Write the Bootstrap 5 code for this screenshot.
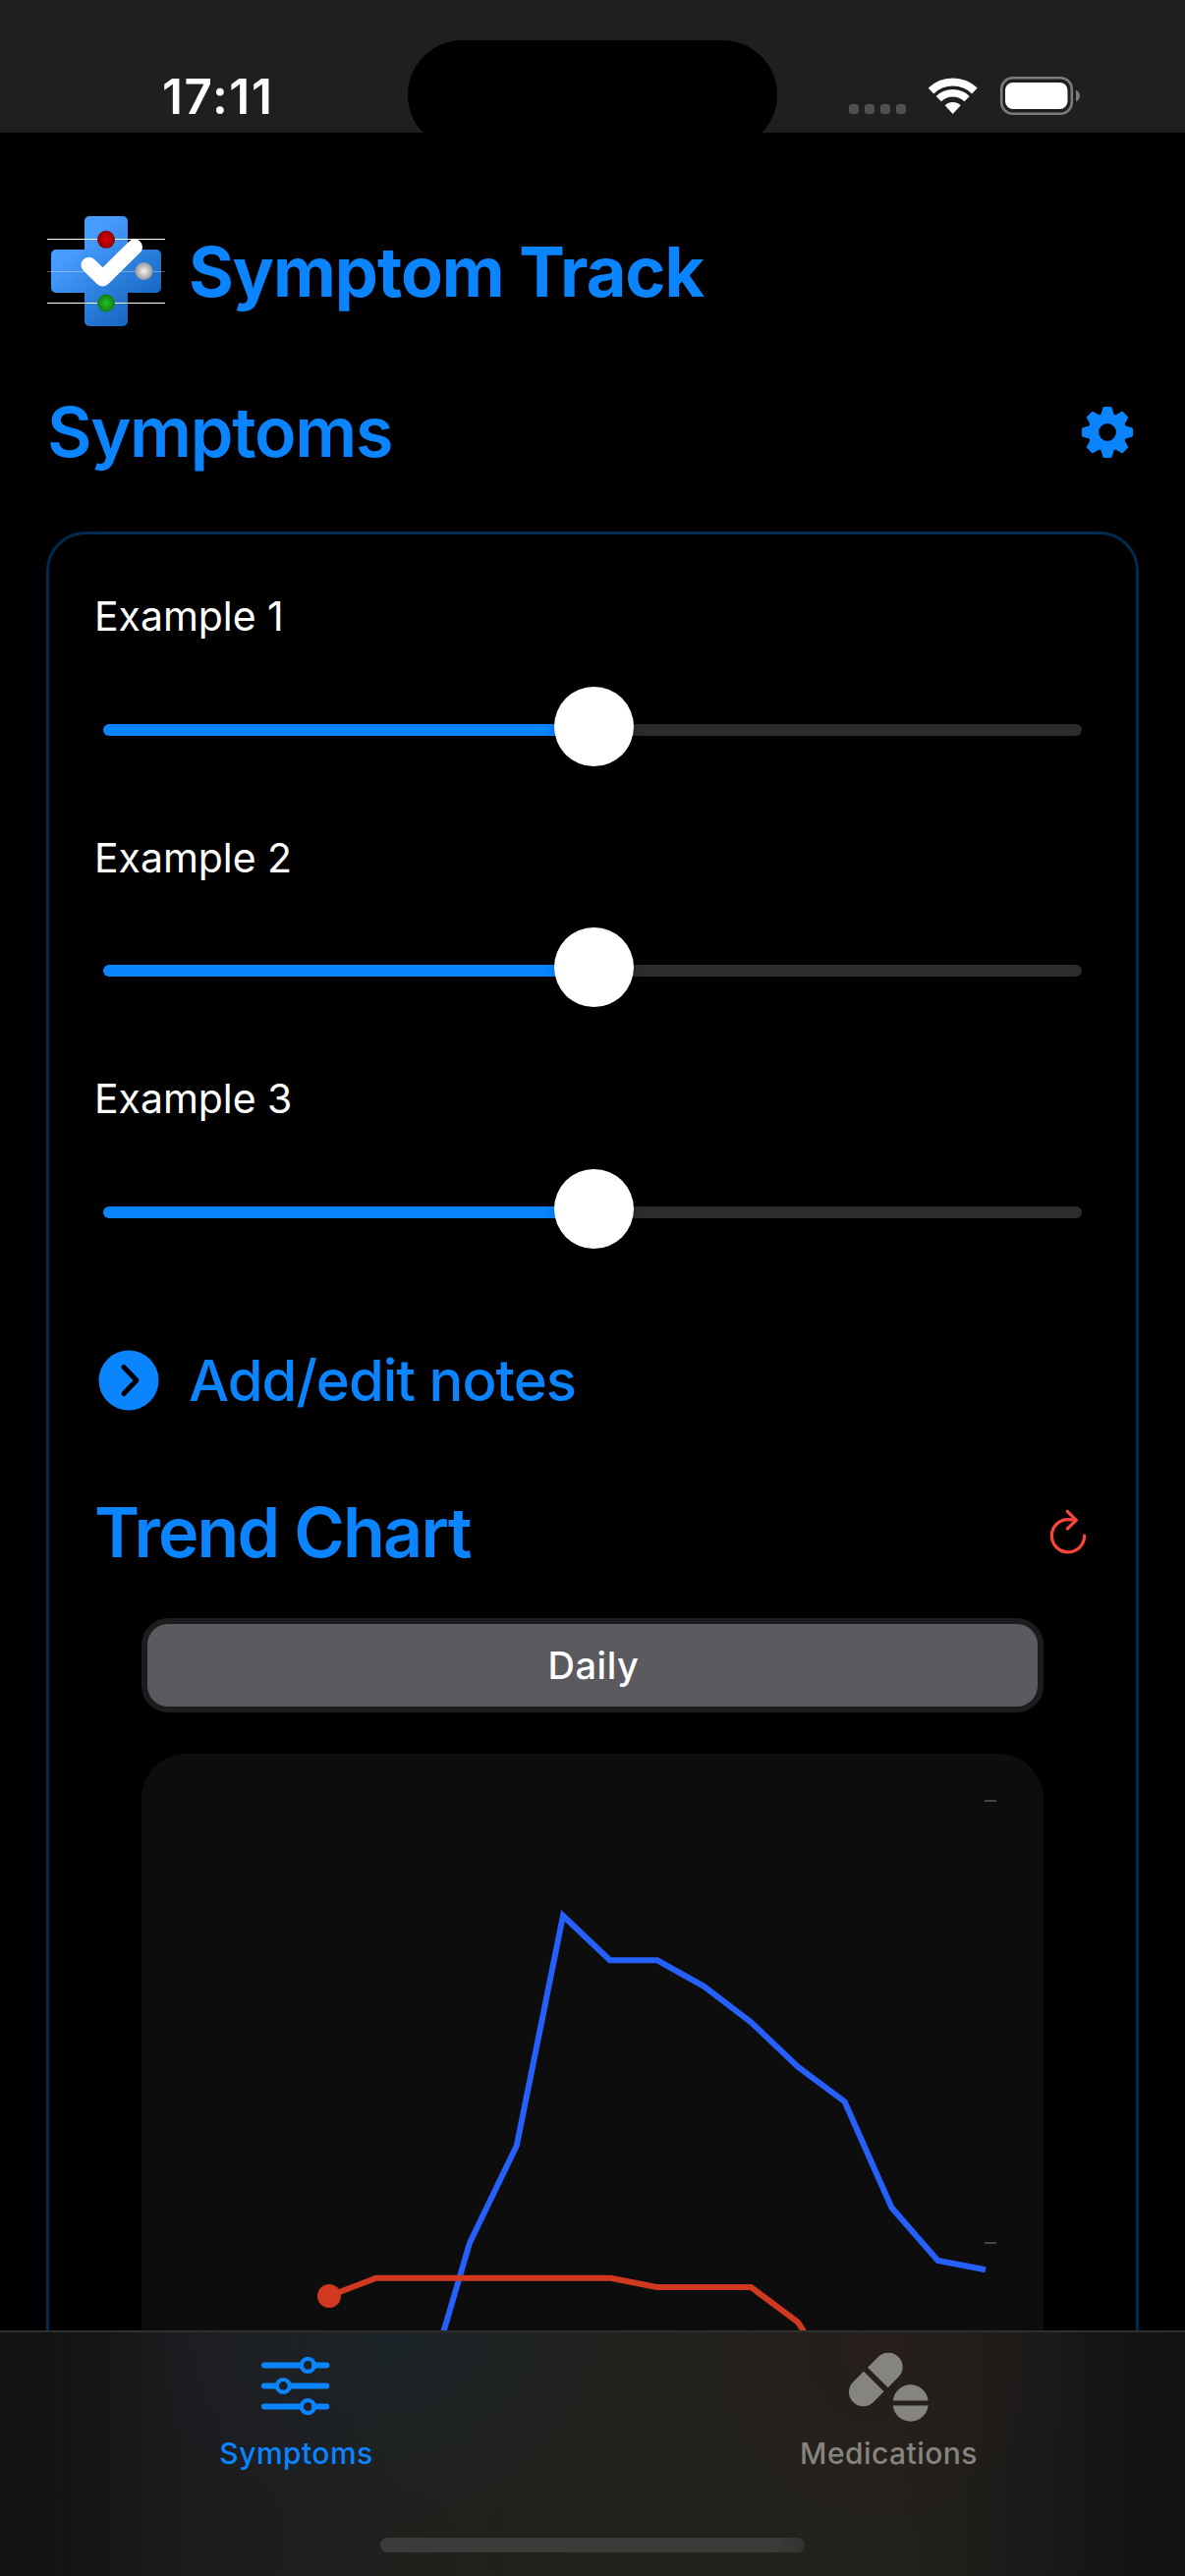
<!DOCTYPE html>
<html lang="en" data-bs-theme="dark">
<head>
<meta charset="utf-8">
<meta name="viewport" content="width=device-width, initial-scale=1">
<title>Symptom Track</title>
<link href="https://cdn.jsdelivr.net/npm/bootstrap@5.3.0/dist/css/bootstrap.min.css" rel="stylesheet">
<style>
:root{--ios-blue:#0a84ff}
body{background:#000;color:#fff;font-family:Inter,"Liberation Sans",sans-serif;height:2622px;overflow:hidden}
svg{display:block;flex:none}
.text-ios{color:var(--ios-blue)}
.status{height:135px;background:#1f1f1f}
.status-side{width:415px;flex:none;height:135px}
.clock{font-size:49.5px;font-weight:600;letter-spacing:1.6px;line-height:60px;padding:68px 0 0 165px}
.island{width:376px;height:111px;margin-top:41px;border-radius:56px;background:#000;flex:none}
.status-icons{padding-right:105px}
.screen{padding:81px 47px 0}
.brand{height:120px;gap:24px;padding-left:1px}
.brand-name{font-size:70px;font-weight:700;letter-spacing:-1px;line-height:80px;margin:0;padding-top:1px}
.heading{font-size:70px;font-weight:600;letter-spacing:-1.3px;line-height:80px;margin:0;height:80px}
.page-head{margin-top:64px;padding-right:5px;padding-left:1px}
.panel{margin-top:61px;width:1112px;height:2200px;border:3px solid #002a50;border-radius:40px;padding:53px 46px 0;background:#000}
.symptom{height:245.5px}
.symptom label{display:block;font-size:41px;line-height:60px;height:60px;letter-spacing:-.05px}
.slider{display:block;width:996px;height:81px;margin:45px 0 0 9px}
.slider::-webkit-slider-runnable-track{height:12px;border-radius:6px;background:linear-gradient(90deg,var(--ios-blue) 50%,#2c2c2e 50%)}
.slider::-webkit-slider-thumb{width:81px;height:81px;margin-top:-38px;background:#fff;border-radius:50%;box-shadow:0 1px 12px rgba(0,0,0,.2)}
.notes{margin-top:40.5px;height:62px;gap:30px;font-size:58px;font-weight:500;letter-spacing:-1px;line-height:62px;padding:0 0 0 4px;border:0;background:none}
.trend-head{margin-top:84px;padding-right:1px}
.trend-head .heading{letter-spacing:-1.8px}
.segments{margin:47px 48px 0;height:96px;width:918px;padding:6px;border-radius:27px;background:#1c1c1e}
.segments .btn{border-radius:21px;background:#5b5a5f;color:#fff;font-size:38px;font-weight:500;letter-spacing:.5px;line-height:84px;padding:0 0 0 2px;border:0}
.chart{margin:42px 48px 0;width:918px;height:900px;border-radius:46px;background:#0d0d0d;overflow:hidden}
.tabs{height:250px;flex:none;border-top:2px solid #2f2f2f;background:
 radial-gradient(ellipse 260px 200px at 400px 0,rgba(28,36,42,.9),rgba(28,36,42,0)),
 radial-gradient(ellipse 220px 240px at 890px 20px,rgba(40,29,26,.7),rgba(40,29,26,0)),
 linear-gradient(90deg,#111412 0,#141615 8%,#1c1c1f 16%,#1d1d1f 22%,#20211d 34%,#22221c 50%,#22221d 76%,#1b1b19 85%,#141716 92%,#111313 100%)}
.tab{flex:1 1 0;height:145px;padding-top:16px;color:#858480;font-size:30px;font-weight:500;letter-spacing:.45px;line-height:40px;gap:3px;text-decoration:none}
.tab.active{color:var(--ios-blue)}
.home-bar{width:432px;height:15px;margin:64px auto 0;border-radius:8px;background:linear-gradient(90deg,#3c3b39 92%,#333230)}
</style>
</head>
<body class="d-flex flex-column">
<header class="status d-flex align-items-start flex-shrink-0 overflow-hidden">
  <div class="status-side"><div class="clock">17:11</div></div>
  <div class="island"></div>
  <div class="status-side status-icons d-flex justify-content-end">
    <svg width="240" height="135" viewBox="862 0 240 135">
      <g fill="#4f4f4f"><rect x="865" y="106" width="10" height="10" rx="3"/><rect x="881" y="106" width="10" height="10" rx="3"/><rect x="897" y="106" width="10" height="10" rx="3"/><rect x="913" y="106" width="10" height="10" rx="3"/></g>
      <g fill="none" stroke="#fff"><path stroke-width="8" d="M948.5 92.5A32 32 0 0 1 992.9 92.5"/><path stroke-width="7.5" d="M956.3 100.6A20.7 20.7 0 0 1 985.1 100.6"/></g>
      <path fill="#fff" d="M970.7 116 962.7 107.2A11.5 11.5 0 0 1 978.7 107.2Z"/>
      <rect x="1020.2" y="79.2" width="71.6" height="36.6" rx="11.5" fill="none" stroke="#7b7b7b" stroke-width="2.6"/>
      <rect x="1024" y="84" width="63.5" height="27" rx="8" fill="#fff"/>
      <path fill="#7b7b7b" d="M1096 91.5q4 2 4 6t-4 6z"/>
    </svg>
  </div>
</header>

<main class="screen flex-grow-1 overflow-hidden">
  <div class="brand d-flex align-items-center">
    <svg width="120" height="120" viewBox="48 216 120 120">
      <defs>
        <linearGradient id="cross" gradientUnits="userSpaceOnUse" x1="75" y1="240" x2="145" y2="320"><stop offset=".1" stop-color="#479cff"/><stop offset="1" stop-color="#1565c0"/></linearGradient>
        <radialGradient id="red"><stop stop-color="#e60000"/><stop offset="1" stop-color="#880000"/></radialGradient>
        <radialGradient id="green"><stop stop-color="#1ec31e"/><stop offset="1" stop-color="#157a15"/></radialGradient>
        <radialGradient id="gray"><stop stop-color="#f5f5f5"/><stop offset="1" stop-color="#999"/></radialGradient>
      </defs>
      <path fill="url(#cross)" d="M91 220h34a5 5 0 0 1 5 5v29h29a5 5 0 0 1 5 5v34a5 5 0 0 1-5 5h-29v29a5 5 0 0 1-5 5h-34a5 5 0 0 1-5-5v-29h-29a5 5 0 0 1-5-5v-34a5 5 0 0 1 5-5h29v-29a5 5 0 0 1 5-5z"/>
      <path stroke="#fff" d="M48 243.5h120M48 308.5h120"/><path stroke="#fff" stroke-opacity=".35" d="M48 276.5h120"/>
      <path fill="none" stroke="#fff" stroke-width="16" stroke-linecap="round" stroke-linejoin="round" d="M90.5 269.7 104.6 283.4 137 251.4"/>
      <circle cx="108" cy="243.8" r="9" fill="url(#red)"/><circle cx="108" cy="308.5" r="9" fill="url(#green)"/><circle cx="146.5" cy="276" r="9" fill="url(#gray)"/>
    </svg>
    <h1 class="brand-name text-ios">Symptom Track</h1>
  </div>

  <div class="page-head d-flex justify-content-between align-items-center">
    <h2 class="heading text-ios">Symptoms</h2>
    <svg width="54" height="54" viewBox="-27 -27 54 54" fill="#0a84ff" stroke="#0a84ff" stroke-width="3" stroke-linejoin="round">
      <defs><path id="tooth" d="M-3.2-24.5H3.2L5.6-16H-5.6z"/></defs>
      <circle r="14.2" fill="none" stroke-width="10.6"/>
      <use href="#tooth"/><use href="#tooth" transform="rotate(45)"/><use href="#tooth" transform="rotate(90)"/><use href="#tooth" transform="rotate(135)"/><use href="#tooth" transform="rotate(180)"/><use href="#tooth" transform="rotate(225)"/><use href="#tooth" transform="rotate(270)"/><use href="#tooth" transform="rotate(315)"/>
    </svg>
  </div>

  <section class="panel">
    <div class="symptom"><label for="s1">Example 1</label><input id="s1" type="range" class="form-range slider" min="0" max="100" step="any" value="50.16"></div>
    <div class="symptom"><label for="s2">Example 2</label><input id="s2" type="range" class="form-range slider" min="0" max="100" step="any" value="50.16"></div>
    <div class="symptom"><label for="s3">Example 3</label><input id="s3" type="range" class="form-range slider" min="0" max="100" step="any" value="50.16"></div>

    <button type="button" class="notes text-ios d-flex align-items-center">
      <svg width="62" height="62" viewBox="-31 -31 62 62"><circle r="30.5" fill="#0a84ff"/><path d="M-5-13.5 8 0-5 13.5" fill="none" stroke="#000" stroke-width="5" stroke-linecap="round" stroke-linejoin="round"/></svg>
      <span>Add/edit notes</span>
    </button>

    <div class="trend-head d-flex justify-content-between align-items-center">
      <h2 class="heading text-ios">Trend Chart</h2>
      <svg width="44" height="50" viewBox="1065 1535 44 50" fill="none" stroke="#ff453a" stroke-width="3.2" stroke-linecap="round" stroke-linejoin="round"><path d="M1103.6 1563A16.6 16.6 0 1 1 1087 1546.6Q1091 1546.6 1095 1547.3"/><path d="M1086.3 1538.3 1095.3 1547.3 1086.3 1556"/></svg>
    </div>

    <div class="segments btn-group d-flex"><button type="button" class="btn w-100">Daily</button></div>

    <div class="chart">
      <svg width="918" height="900" viewBox="144 1785 918 900" fill="none" stroke-width="6">
        <path stroke="#454545" stroke-width="2" d="M1002 1833h12M1002 2283h12"/>
        <path stroke="#2660fa" d="M430.3 2473 451.5 2373 478 2283 525.8 2184 573 1950 620.8 1995.3H669L716.4 2021.8 764 2058 812.3 2104 859.6 2139.2 907.4 2247 954.5 2301 1003 2310.3"/>
        <path stroke="#d03920" d="M335 2337 382.7 2318.7H621.5L668.5 2328H764.3L812 2363.5 860 2440"/>
        <circle cx="335" cy="2337" r="12" fill="#d03920"/>
      </svg>
    </div>
  </section>
</main>

<nav class="tabs">
  <div class="d-flex">
    <a href="#" class="tab active d-flex flex-column align-items-center">
      <svg width="120" height="84" viewBox="242 2390 120 84" fill="none" stroke="#0a84ff" stroke-width="6" stroke-linecap="round"><path d="M269 2407.4h37M320 2407.4h12.3M269 2428.5h12M296 2428.5h36.3M269 2449.6h37M320 2449.6h12.3"/><g stroke-width="4.2"><circle cx="313.3" cy="2407.4" r="6.5"/><circle cx="288.3" cy="2428.5" r="6.5"/><circle cx="313.3" cy="2449.6" r="6.5"/></g></svg>
      <span>Symptoms</span>
    </a>
    <a href="#" class="tab d-flex flex-column align-items-center">
      <svg width="120" height="84" viewBox="845 2390 120 84" fill="#858480">
        <g transform="translate(891.3 2422) rotate(-45)"><path d="M2.9-14.6H18a14.6 14.6 0 0 1 0 29.2H2.9zM-2.9-14.6H-18a14.6 14.6 0 0 0 0 29.2H-2.9z"/></g>
        <path d="M908.8 2443.4a18 18 0 0 1 35.8 0zM908.8 2448.6a18 18 0 0 0 35.8 0z"/>
      </svg>
      <span>Medications</span>
    </a>
  </div>
  <div class="home-bar"></div>
</nav>
<script src="https://cdn.jsdelivr.net/npm/bootstrap@5.3.0/dist/js/bootstrap.bundle.min.js"></script>
</body>
</html>
